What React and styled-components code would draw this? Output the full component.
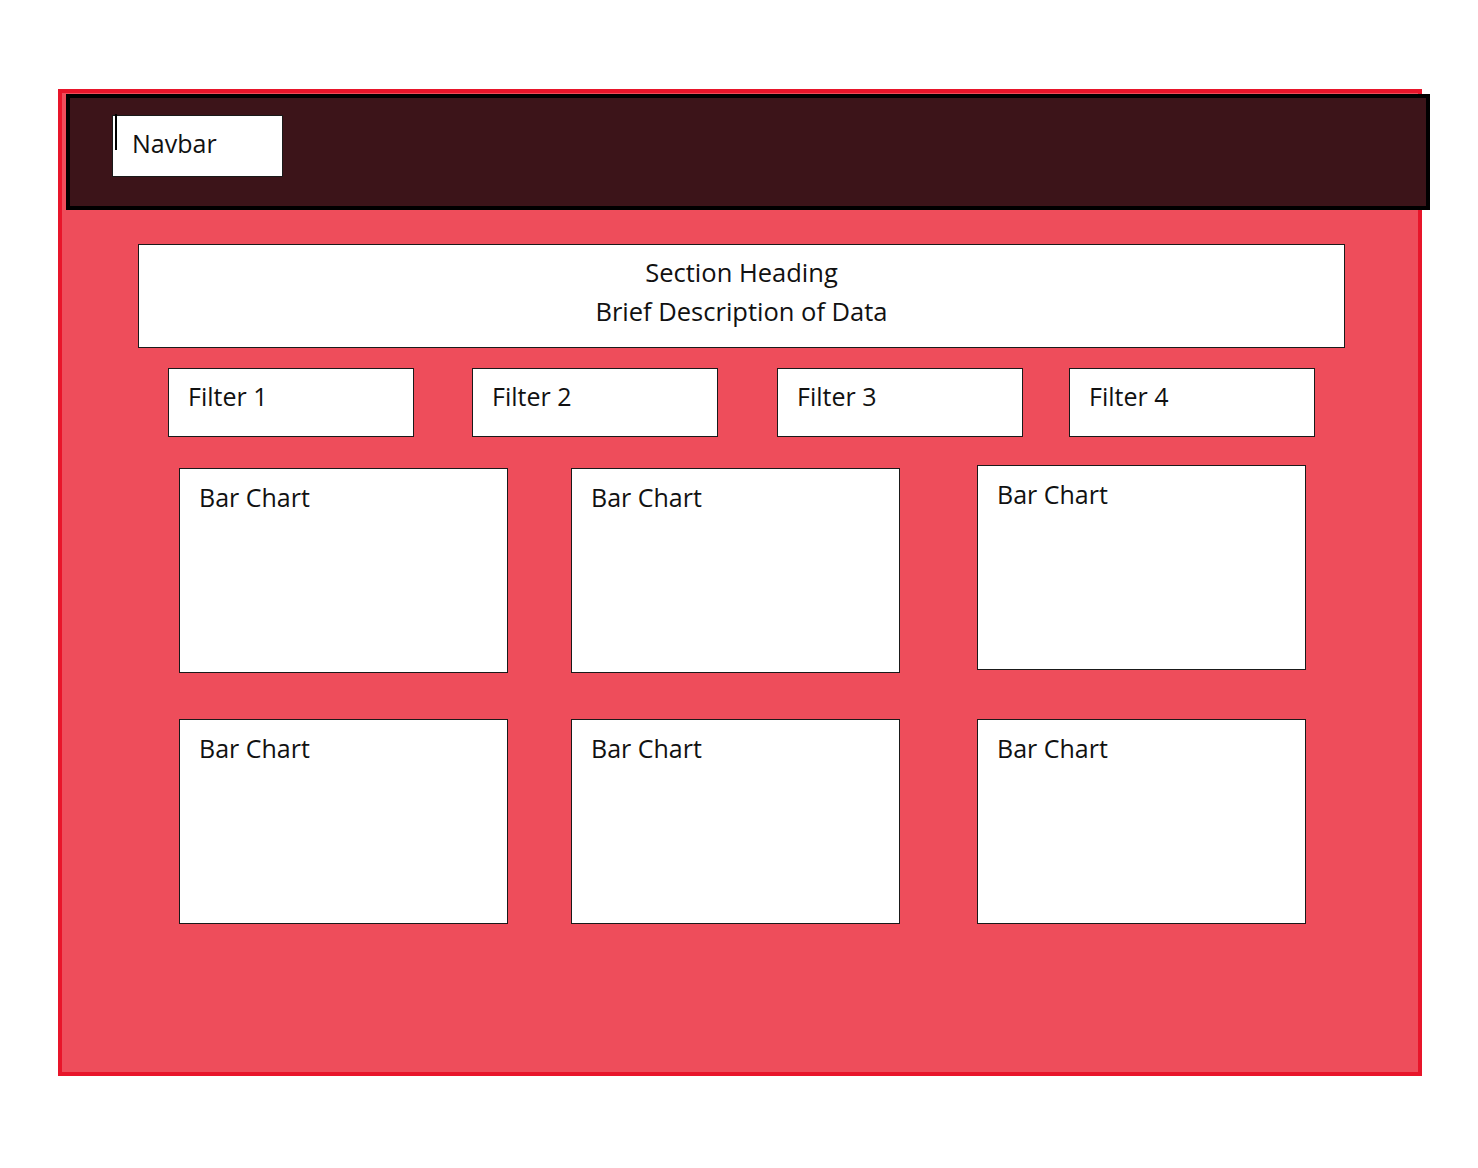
import React from 'react'
import styled, { createGlobalStyle } from 'styled-components'

const GlobalStyle = createGlobalStyle`
  body {
    margin: 0;
    background: #ffffff;
    font-family: "Open Sans", "Noto Sans", sans-serif;
    color: #111111;
  }
`

const filters = [
    { label: 'Filter 1', offset: 0 },
    { label: 'Filter 2', offset: 58 },
    { label: 'Filter 3', offset: 59 },
    { label: 'Filter 4', offset: 46 },
]

const charts = [
    { id: 1, nudge: 0 },
    { id: 2, nudge: 0 },
    { id: 3, nudge: -3 },
    { id: 4, nudge: 0 },
    { id: 5, nudge: 0 },
    { id: 6, nudge: 0 },
]

const App = () => {
    return (
        <Page>
            <GlobalStyle />
            <Frame>
                <Navbar>
                    <NavLabel>
                        <Cursor />
                        Navbar
                    </NavLabel>
                </Navbar>
                <Heading>
                    <div>Section Heading</div>
                    <div>Brief Description of Data</div>
                </Heading>
                <FilterRow>
                    {filters.map((f) => (
                        <Filter key={f.label} offset={f.offset}>{f.label}</Filter>
                    ))}
                </FilterRow>
                <ChartGrid>
                    {charts.map((c) => (
                        <ChartCard key={c.id} nudge={c.nudge}>Bar Chart</ChartCard>
                    ))}
                </ChartGrid>
            </Frame>
        </Page>
    )
}

export default App

const Page = styled.div`
    padding: 89px 0 0 58px;
    height: 1168px;
    box-sizing: border-box;
`

const Frame = styled.div`
    width: 1364px;
    height: 987px;
    box-sizing: border-box;
    border: 4px solid #e8152a;
    background: #ee4d5b;
`

const Navbar = styled.nav`
    margin: 1px 0 0 4px;
    width: 1364px;
    height: 116px;
    box-sizing: border-box;
    border: 4px solid #000000;
    background: #3c1419;
    padding: 17px 0 0 42px;
`

const NavLabel = styled.div`
    position: relative;
    width: 171px;
    height: 62px;
    box-sizing: border-box;
    background: #ffffff;
    border: 1px solid #1a1a1a;
    padding: 11px 0 0 19px;
    font-size: 25px;
    line-height: 32px;
`

const Cursor = styled.span`
    position: absolute;
    left: 2px;
    top: -2px;
    width: 2px;
    height: 36px;
    background: #000000;
`

const Heading = styled.header`
    margin: 34px 0 0 76px;
    width: 1207px;
    height: 104px;
    box-sizing: border-box;
    background: #ffffff;
    border: 1px solid #1a1a1a;
    padding-top: 8px;
    text-align: center;
    font-size: 25.5px;
    line-height: 39px;
`

const FilterRow = styled.div`
    display: flex;
    margin: 20px 0 0 106px;
`

const Filter = styled.div`
    margin-left: ${(p) => p.offset}px;
    width: 246px;
    height: 69px;
    box-sizing: border-box;
    background: #ffffff;
    border: 1px solid #1a1a1a;
    padding: 11px 0 0 19px;
    font-size: 25px;
    line-height: 32px;
`

const ChartGrid = styled.div`
    display: grid;
    grid-template-columns: 329px 63px 329px 77px 329px;
    row-gap: 46px;
    margin: 31px 0 0 117px;

    & > :nth-child(3n + 1) { grid-column: 1; }
    & > :nth-child(3n + 2) { grid-column: 3; }
    & > :nth-child(3n) { grid-column: 5; }
`

const ChartCard = styled.div`
    height: 205px;
    box-sizing: border-box;
    background: #ffffff;
    border: 1px solid #1a1a1a;
    padding: 12px 0 0 19px;
    font-size: 25px;
    line-height: 32px;
    margin-top: ${(p) => p.nudge}px;
    margin-bottom: ${(p) => -p.nudge}px;
`
